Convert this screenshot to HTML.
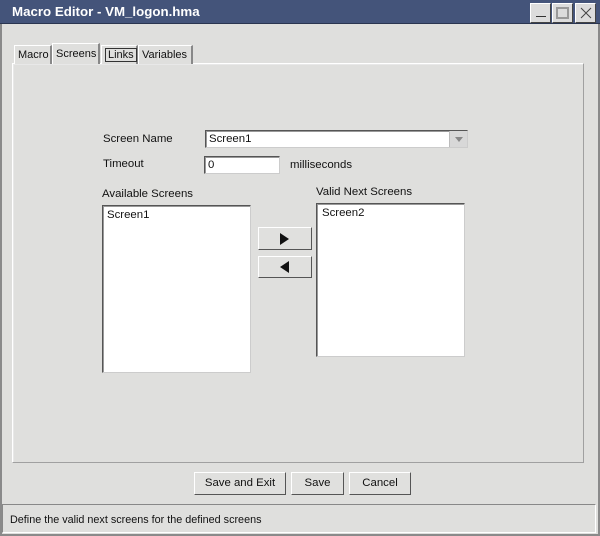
<!DOCTYPE html>
<html><head><style>
*{box-sizing:border-box;margin:0;padding:0}
body{width:600px;height:536px;background:#dfdfdd;font-family:"Liberation Sans",sans-serif;font-size:11.4px;color:#111;position:relative;overflow:hidden}
.a{position:absolute}
.win{left:0;top:0;width:600px;height:536px;border:2px solid #8a8a8a;border-top:none}
.title{left:0;top:0;width:600px;height:24px;background:#44547a;border-bottom:1px solid #2a3550;color:#fff;font-weight:bold;font-size:13.3px;padding:4px 0 0 12px}
.tb{top:3px;width:21px;height:20px;background:#dcdcdc;border:1px solid;border-color:#fff #444 #444 #fff}
.tab{top:45px;height:19px;border:1px solid #fff;border-right:2px solid #888;border-bottom:none;padding:3px 3px 0;background:#dfdfdd;font-size:11px}
.panel{left:12px;top:63px;width:572px;height:400px;border:1px solid;border-color:#fff #a0a0a0 #a0a0a0 #fff;box-shadow:inset 1px 1px 0 #e8e8e8}
.field{background:#fff;border:1px solid;border-color:#555 #ccc #ccc #555;box-shadow:inset 1px 1px 0 #999;padding:2px 3px 0}
.btn{border:1px solid;border-color:#fff #555 #555 #fff;background:#e0e0de;text-align:center;line-height:21px}
</style></head><body>
<div class="a win"></div>
<div class="a title">Macro Editor - VM_logon.hma</div>
<div class="a tb" style="left:530px"><div class="a" style="left:5px;top:12px;width:10px;height:1px;background:#333"></div></div>
<div class="a tb" style="left:552px"><div class="a" style="left:3px;top:3px;width:13px;height:12px;border:2px solid #999"></div></div>
<div class="a tb" style="left:575px"><svg class="a" style="left:4px;top:3px" width="12" height="12"><path d="M1 1L11 11M11 1L1 11" stroke="#444" stroke-width="1"/></svg></div>
<div class="a panel"></div>
<div class="a tab" style="left:14px;width:38px">Macro</div>
<div class="a tab" style="left:52px;top:43px;height:21px;width:48px;padding-top:4px">Screens</div>
<div class="a tab" style="left:101px;width:37px"><span style="border:1px solid #333;padding:0 2px">Links</span></div>
<div class="a tab" style="left:138px;width:55px">Variables</div>
<div class="a" style="left:103px;top:133px">Screen Name</div>
<div class="a field" style="left:205px;top:130px;width:263px;height:18px">Screen1</div>
<div class="a" style="left:449px;top:131px;width:18px;height:16px;background:#d8d8d8;border-left:1px solid #bbb"><svg class="a" style="left:5px;top:6px" width="8" height="5"><path d="M0 0H8L4 5Z" fill="#888"/></svg></div>
<div class="a" style="left:103px;top:158px">Timeout</div>
<div class="a field" style="left:204px;top:156px;width:76px;height:18px">0</div>
<div class="a" style="left:290px;top:159px">milliseconds</div>
<div class="a" style="left:102px;top:188px">Available Screens</div>
<div class="a field" style="left:102px;top:205px;width:149px;height:168px;padding:3px 4px">Screen1</div>
<div class="a" style="left:316px;top:186px">Valid Next Screens</div>
<div class="a field" style="left:316px;top:203px;width:149px;height:154px;padding:3px 5px">Screen2</div>
<div class="a btn" style="left:258px;top:227px;width:54px;height:23px"><svg class="a" style="left:21px;top:5px" width="10" height="12"><path d="M0 0L9 6L0 12Z" fill="#111"/></svg></div>
<div class="a btn" style="left:258px;top:256px;width:54px;height:22px"><svg class="a" style="left:21px;top:4px" width="10" height="12"><path d="M9 0L0 6L9 12Z" fill="#111"/></svg></div>
<div class="a btn" style="left:194px;top:472px;width:92px;height:23px">Save and Exit</div>
<div class="a btn" style="left:291px;top:472px;width:53px;height:23px">Save</div>
<div class="a btn" style="left:349px;top:472px;width:62px;height:23px">Cancel</div>
<div class="a" style="left:2px;top:504px;width:594px;height:29px;border:1px solid;border-color:#888 #fff #fff #888;padding:9px 0 0 7px;font-size:10.8px">Define the valid next screens for the defined screens</div>
</body></html>
